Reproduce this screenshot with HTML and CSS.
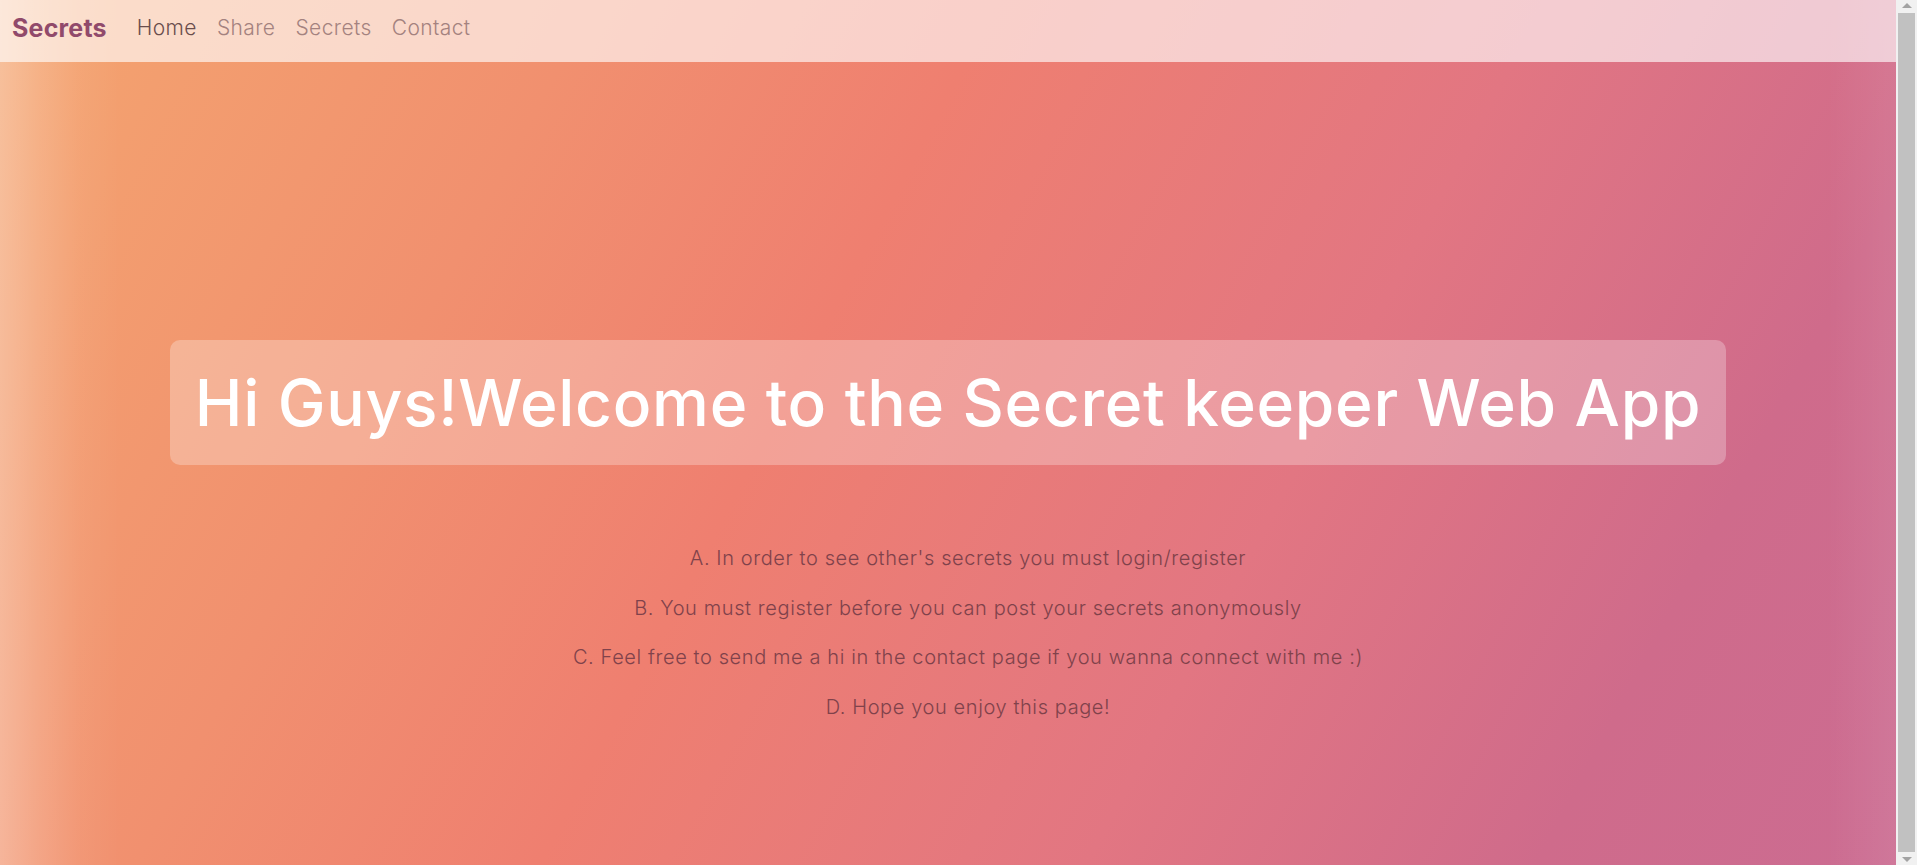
FILE: index.html
```html
<!DOCTYPE html>
<html lang="en">
<head>
<meta charset="utf-8">
<title>Secrets</title>
<link rel="stylesheet" href="styles.css">
</head>
<body>
<div class="page">
  <nav class="navbar">
    <a class="brand" href="#">Secrets</a>
    <ul class="nav-links">
      <li><a class="nav-link active" href="#">Home</a></li>
      <li><a class="nav-link" href="#">Share</a></li>
      <li><a class="nav-link" href="#">Secrets</a></li>
      <li><a class="nav-link" href="#">Contact</a></li>
    </ul>
  </nav>
  <main class="hero">
    <div class="title-box">
      <h1 class="title">Hi Guys!Welcome to the Secret keeper Web App</h1>
    </div>
    <ul class="notes">
      <li>A. In order to see other's secrets you must login/register</li>
      <li>B. You must register before you can post your secrets anonymously</li>
      <li>C. Feel free to send me a hi in the contact page if you wanna connect with me :)</li>
      <li>D. Hope you enjoy this page!</li>
    </ul>
  </main>
</div>
<div class="scrollbar" aria-hidden="true">
  <span class="scroll-arrow up"></span>
  <span class="scroll-thumb"></span>
  <span class="scroll-arrow down"></span>
</div>
</body>
</html>
```

FILE: styles.css
```css
html, body {
  margin: 0;
  padding: 0;
  overflow: hidden;
}

body {
  font-family: "Inter", "Open Sans", "Liberation Sans", sans-serif;
  height: 865px;
  padding-right: 21px;
  background:
    linear-gradient(to right, rgba(255, 255, 255, 0.3) 0px, rgba(255, 255, 255, 0.16) 40px, rgba(255, 255, 255, 0.05) 80px, rgba(255, 255, 255, 0) 120px),
    linear-gradient(to left, rgba(255, 255, 255, 0.08) 21px, rgba(255, 255, 255, 0) 90px),
    linear-gradient(118deg, #f4a56f 0%, #f1906f 25%, #ef7f70 42%, #e27682 65%, #cf6b8b 84%, #cb6c92 100%);
}

.page {
  height: 865px;
}

.navbar {
  display: flex;
  align-items: center;
  height: 62px;
  padding: 0 0 6px 12px;
  background: rgba(255, 255, 255, 0.63);
  box-sizing: border-box;
}

.brand {
  font-size: 25px;
  font-weight: 700;
  color: #914a6b;
  text-decoration: none;
  margin-right: 20px;
  letter-spacing: 0.2px;
}

.nav-links {
  display: flex;
  list-style: none;
  margin: 0;
  padding: 0;
}

.nav-link {
  display: block;
  padding: 6px 10px 8px;
  font-size: 21px;
  font-weight: 300;
  letter-spacing: 0.4px;
  color: #a4827f;
  text-decoration: none;
}

.nav-link.active {
  color: #6a4d4d;
}

.hero {
  text-align: center;
  padding-top: 278px;
}

.title-box {
  display: inline-block;
  padding: 24px 25px;
  border-radius: 10px;
  background: rgba(255, 255, 255, 0.27);
}

.title {
  margin: 0;
  font-size: 64px;
  line-height: 77px;
  font-weight: 500;
  letter-spacing: 0.7px;
  color: #ffffff;
}

.notes {
  list-style: none;
  margin: 69px 0 0;
  padding: 0 0 0 40px;
}

.notes li {
  font-size: 20px;
  line-height: 49.6px;
  font-weight: 300;
  letter-spacing: 0.6px;
  color: #80424b;
}

.scrollbar {
  position: fixed;
  top: 0;
  right: 0;
  width: 21px;
  height: 865px;
  background: #f1f1f1;
  display: flex;
  flex-direction: column;
  align-items: center;
}

.scroll-arrow {
  width: 0;
  height: 0;
  border-left: 5px solid transparent;
  border-right: 5px solid transparent;
  margin: 3px 0;
}

.scroll-arrow.up {
  border-bottom: 5px solid #a3a3a3;
}

.scroll-arrow.down {
  border-top: 5px solid #a3a3a3;
}

.scroll-thumb {
  flex: 1;
  width: 17px;
  margin: 2px 0;
  background: #c1c1c1;
}
```
